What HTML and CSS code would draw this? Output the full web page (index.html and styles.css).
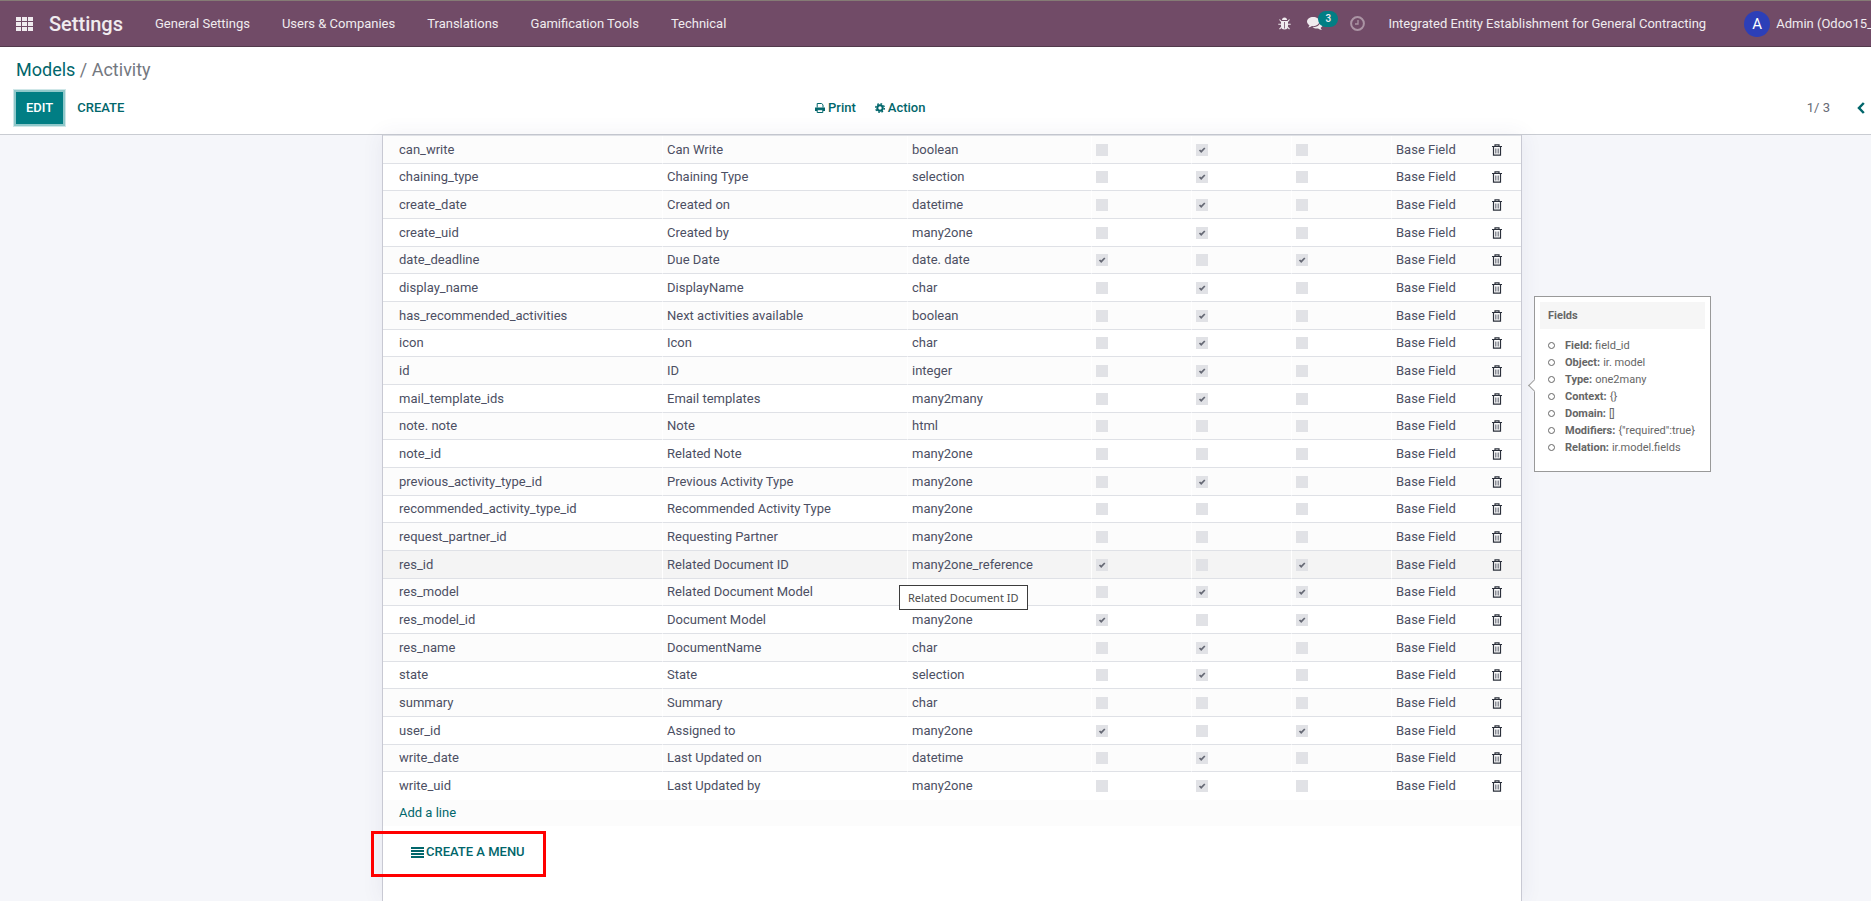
FILE: index.html
```html
<!doctype html>
<html lang="en">
<head>
<meta charset="utf-8">
<title>Activity - Settings</title>
<link rel="stylesheet" href="styles.css">
</head>

<body>
<svg class="sprite" aria-hidden="true">
	<symbol id="trash" viewBox="0 0 10 12">
		<path d="M0 2.5h10M3 2V.8h4V2M1.5 3v8.2h7V3" fill="none" stroke="#2b303b" stroke-width="1.2"/>
		<path d="M3.5 4.5v5M5 4.5v5M6.5 4.5v5" fill="none" stroke="#6b6f7a" stroke-width=".8"/>
	</symbol>
</svg>

<header class="navbar">
	<button class="apps" aria-label="Applications">
		<svg width="17" height="14" viewBox="0 0 17 14" fill="currentColor"><path d="M0 0h5v4H0zM6 0h5v4H6zM12 0h5v4h-5zM0 5h5v4H0zM6 5h5v4H6zM12 5h5v4h-5zM0 10h5v4H0zM6 10h5v4H6zM12 10h5v4h-5z"/></svg>
	</button>
	<a class="brand" href="#">Settings</a>
	<nav class="menu">
		<a href="#">General Settings</a>
		<a href="#">Users &amp; Companies</a>
		<a href="#">Translations</a>
		<a href="#">Gamification Tools</a>
		<a href="#">Technical</a>
	</nav>
	<div class="systray">
		<button class="tray" aria-label="Debug">
			<svg width="13" height="13" viewBox="0 0 13 13"><path d="M4 3a2.5 2.5 0 0 1 5 0z" fill="currentColor"/><path d="M3 4h7v5a3.5 3.5 0 0 1-7 0z" fill="currentColor"/><path d="M1.500 2.500 3.500 4.800M11.500 2.500 9.500 4.800M.3 7.300h12.400M1.500 12.200 3.600 9.800M11.500 12.200 9.400 9.800" stroke="currentColor" stroke-width="1.1"/><path d="M6.500 5v6.500" stroke="#714b67" stroke-width=".8"/></svg>
		</button>
		<button class="tray chat" aria-label="Messages">
			<svg width="16" height="14" viewBox="0 0 16 14" fill="currentColor"><path d="M6.200 0c3.400 0 6.200 2 6.200 4.600S9.600 9.200 6.200 9.200l-1.200-.1C3.900 9.900 2.500 10.500 1 10.600c.7-.6 1.300-1.300 1.400-2.300C.9 7.400 0 6.100 0 4.600 0 2 2.800 0 6.200 0z"/><path d="M13.500 3.800C15 4.600 16 5.900 16 7.300c0 1.400-.9 2.700-2.300 3.500.1 1 .7 1.600 1.300 2.200-1.500-.1-2.900-.6-3.900-1.500-2 .3-4.200-.1-5.700-1.300 4.400.2 8.300-2.300 8.100-6.400z"/></svg>
			<span class="badge">3</span>
		</button>
		<button class="tray clock" aria-label="Activities">
			<svg width="15" height="15" viewBox="0 0 15 15" fill="none" stroke="currentColor"><circle cx="7.500" cy="7.500" r="6.400" stroke-width="2"/><path d="M8 4v4H5" stroke-width="1.300"/></svg>
		</button>
		<a class="company" href="#">Integrated Entity Establishment for General Contracting</a>
		<a class="user" href="#"><span class="avatar">A</span>Admin (Odoo15_</a>
	</div>
</header>

<section class="control-panel">
	<div class="breadcrumb"><a href="#">Models</a> / Activity</div>
	<div class="toolbar">
		<div class="buttons">
			<button class="btn btn-primary">EDIT</button>
			<button class="btn btn-link">CREATE</button>
		</div>
		<div class="actions">
			<button class="btn-action">
				<svg width="10" height="10" viewBox="0 0 10 10" fill="none" stroke="currentColor"><path d="M2.200 4.500v-4h4.500l1.300 1.300v2.700"/><path d="M0 4.500h10v3.500H0z" fill="currentColor" stroke="none"/><path d="M2.200 6.700h5.600v2.800H2.200z" fill="#fff"/></svg>
				Print
			</button>
			<button class="btn-action">
				<svg width="10" height="10" viewBox="0 0 10 10" fill="none" stroke="currentColor"><circle cx="5" cy="5" r="2.700" stroke-width="2"/><circle cx="5" cy="5" r="4.300" stroke-width="1.400" stroke-dasharray="1.700 1.677"/></svg>
				Action
			</button>
		</div>
		<div class="pager">
			<span>1/ 3</span>
			<button class="prev" aria-label="Previous"><svg width="8" height="12" viewBox="0 0 8 12" fill="none" stroke="currentColor" stroke-width="2.500"><path d="M6.800 1 2 6l4.800 5"/></svg></button>
		</div>
	</div>
</section>

<main class="content">
	<div class="sheet">
		<table class="fields">
			<colgroup><col class="c-name"><col class="c-label"><col class="c-type"><col class="c-bool"><col class="c-bool"><col class="c-bool"><col><col class="c-trash"></colgroup>
			<tbody>
				<tr><td>can_write</td><td>Can Write</td><td>boolean</td><td><input type="checkbox" aria-label="Required" disabled></td><td><input type="checkbox" aria-label="Readonly" disabled checked></td><td><input type="checkbox" aria-label="Indexed" disabled></td><td>Base Field</td><td><button class="del" aria-label="Delete"><svg><use href="#trash"/></svg></button></td></tr>
				<tr><td>chaining_type</td><td>Chaining Type</td><td>selection</td><td><input type="checkbox" aria-label="Required" disabled></td><td><input type="checkbox" aria-label="Readonly" disabled checked></td><td><input type="checkbox" aria-label="Indexed" disabled></td><td>Base Field</td><td><button class="del" aria-label="Delete"><svg><use href="#trash"/></svg></button></td></tr>
				<tr><td>create_date</td><td>Created on</td><td>datetime</td><td><input type="checkbox" aria-label="Required" disabled></td><td><input type="checkbox" aria-label="Readonly" disabled checked></td><td><input type="checkbox" aria-label="Indexed" disabled></td><td>Base Field</td><td><button class="del" aria-label="Delete"><svg><use href="#trash"/></svg></button></td></tr>
				<tr><td>create_uid</td><td>Created by</td><td>many2one</td><td><input type="checkbox" aria-label="Required" disabled></td><td><input type="checkbox" aria-label="Readonly" disabled checked></td><td><input type="checkbox" aria-label="Indexed" disabled></td><td>Base Field</td><td><button class="del" aria-label="Delete"><svg><use href="#trash"/></svg></button></td></tr>
				<tr><td>date_deadline</td><td>Due Date</td><td>date. date</td><td><input type="checkbox" aria-label="Required" disabled checked></td><td><input type="checkbox" aria-label="Readonly" disabled></td><td><input type="checkbox" aria-label="Indexed" disabled checked></td><td>Base Field</td><td><button class="del" aria-label="Delete"><svg><use href="#trash"/></svg></button></td></tr>
				<tr><td>display_name</td><td>DisplayName</td><td>char</td><td><input type="checkbox" aria-label="Required" disabled></td><td><input type="checkbox" aria-label="Readonly" disabled checked></td><td><input type="checkbox" aria-label="Indexed" disabled></td><td>Base Field</td><td><button class="del" aria-label="Delete"><svg><use href="#trash"/></svg></button></td></tr>
				<tr><td>has_recommended_activities</td><td>Next activities available</td><td>boolean</td><td><input type="checkbox" aria-label="Required" disabled></td><td><input type="checkbox" aria-label="Readonly" disabled checked></td><td><input type="checkbox" aria-label="Indexed" disabled></td><td>Base Field</td><td><button class="del" aria-label="Delete"><svg><use href="#trash"/></svg></button></td></tr>
				<tr><td>icon</td><td>Icon</td><td>char</td><td><input type="checkbox" aria-label="Required" disabled></td><td><input type="checkbox" aria-label="Readonly" disabled checked></td><td><input type="checkbox" aria-label="Indexed" disabled></td><td>Base Field</td><td><button class="del" aria-label="Delete"><svg><use href="#trash"/></svg></button></td></tr>
				<tr><td>id</td><td>ID</td><td>integer</td><td><input type="checkbox" aria-label="Required" disabled></td><td><input type="checkbox" aria-label="Readonly" disabled checked></td><td><input type="checkbox" aria-label="Indexed" disabled></td><td>Base Field</td><td><button class="del" aria-label="Delete"><svg><use href="#trash"/></svg></button></td></tr>
				<tr><td>mail_template_ids</td><td>Email templates</td><td>many2many</td><td><input type="checkbox" aria-label="Required" disabled></td><td><input type="checkbox" aria-label="Readonly" disabled checked></td><td><input type="checkbox" aria-label="Indexed" disabled></td><td>Base Field</td><td><button class="del" aria-label="Delete"><svg><use href="#trash"/></svg></button></td></tr>
				<tr><td>note. note</td><td>Note</td><td>html</td><td><input type="checkbox" aria-label="Required" disabled></td><td><input type="checkbox" aria-label="Readonly" disabled></td><td><input type="checkbox" aria-label="Indexed" disabled></td><td>Base Field</td><td><button class="del" aria-label="Delete"><svg><use href="#trash"/></svg></button></td></tr>
				<tr><td>note_id</td><td>Related Note</td><td>many2one</td><td><input type="checkbox" aria-label="Required" disabled></td><td><input type="checkbox" aria-label="Readonly" disabled></td><td><input type="checkbox" aria-label="Indexed" disabled></td><td>Base Field</td><td><button class="del" aria-label="Delete"><svg><use href="#trash"/></svg></button></td></tr>
				<tr><td>previous_activity_type_id</td><td>Previous Activity Type</td><td>many2one</td><td><input type="checkbox" aria-label="Required" disabled></td><td><input type="checkbox" aria-label="Readonly" disabled checked></td><td><input type="checkbox" aria-label="Indexed" disabled></td><td>Base Field</td><td><button class="del" aria-label="Delete"><svg><use href="#trash"/></svg></button></td></tr>
				<tr><td>recommended_activity_type_id</td><td>Recommended Activity Type</td><td>many2one</td><td><input type="checkbox" aria-label="Required" disabled></td><td><input type="checkbox" aria-label="Readonly" disabled></td><td><input type="checkbox" aria-label="Indexed" disabled></td><td>Base Field</td><td><button class="del" aria-label="Delete"><svg><use href="#trash"/></svg></button></td></tr>
				<tr><td>request_partner_id</td><td>Requesting Partner</td><td>many2one</td><td><input type="checkbox" aria-label="Required" disabled></td><td><input type="checkbox" aria-label="Readonly" disabled></td><td><input type="checkbox" aria-label="Indexed" disabled></td><td>Base Field</td><td><button class="del" aria-label="Delete"><svg><use href="#trash"/></svg></button></td></tr>
				<tr class="hover"><td>res_id</td><td>Related Document ID</td><td class="tip-cell">many2one_reference<span class="tip" role="tooltip">Related Document ID</span></td><td><input type="checkbox" aria-label="Required" disabled checked></td><td><input type="checkbox" aria-label="Readonly" disabled></td><td><input type="checkbox" aria-label="Indexed" disabled checked></td><td>Base Field</td><td><button class="del" aria-label="Delete"><svg><use href="#trash"/></svg></button></td></tr>
				<tr><td>res_model</td><td>Related Document Model</td><td></td><td><input type="checkbox" aria-label="Required" disabled></td><td><input type="checkbox" aria-label="Readonly" disabled checked></td><td><input type="checkbox" aria-label="Indexed" disabled checked></td><td>Base Field</td><td><button class="del" aria-label="Delete"><svg><use href="#trash"/></svg></button></td></tr>
				<tr><td>res_model_id</td><td>Document Model</td><td>many2one</td><td><input type="checkbox" aria-label="Required" disabled checked></td><td><input type="checkbox" aria-label="Readonly" disabled></td><td><input type="checkbox" aria-label="Indexed" disabled checked></td><td>Base Field</td><td><button class="del" aria-label="Delete"><svg><use href="#trash"/></svg></button></td></tr>
				<tr><td>res_name</td><td>DocumentName</td><td>char</td><td><input type="checkbox" aria-label="Required" disabled></td><td><input type="checkbox" aria-label="Readonly" disabled checked></td><td><input type="checkbox" aria-label="Indexed" disabled></td><td>Base Field</td><td><button class="del" aria-label="Delete"><svg><use href="#trash"/></svg></button></td></tr>
				<tr><td>state</td><td>State</td><td>selection</td><td><input type="checkbox" aria-label="Required" disabled></td><td><input type="checkbox" aria-label="Readonly" disabled checked></td><td><input type="checkbox" aria-label="Indexed" disabled></td><td>Base Field</td><td><button class="del" aria-label="Delete"><svg><use href="#trash"/></svg></button></td></tr>
				<tr><td>summary</td><td>Summary</td><td>char</td><td><input type="checkbox" aria-label="Required" disabled></td><td><input type="checkbox" aria-label="Readonly" disabled></td><td><input type="checkbox" aria-label="Indexed" disabled></td><td>Base Field</td><td><button class="del" aria-label="Delete"><svg><use href="#trash"/></svg></button></td></tr>
				<tr><td>user_id</td><td>Assigned to</td><td>many2one</td><td><input type="checkbox" aria-label="Required" disabled checked></td><td><input type="checkbox" aria-label="Readonly" disabled></td><td><input type="checkbox" aria-label="Indexed" disabled checked></td><td>Base Field</td><td><button class="del" aria-label="Delete"><svg><use href="#trash"/></svg></button></td></tr>
				<tr><td>write_date</td><td>Last Updated on</td><td>datetime</td><td><input type="checkbox" aria-label="Required" disabled></td><td><input type="checkbox" aria-label="Readonly" disabled checked></td><td><input type="checkbox" aria-label="Indexed" disabled></td><td>Base Field</td><td><button class="del" aria-label="Delete"><svg><use href="#trash"/></svg></button></td></tr>
				<tr><td>write_uid</td><td>Last Updated by</td><td>many2one</td><td><input type="checkbox" aria-label="Required" disabled></td><td><input type="checkbox" aria-label="Readonly" disabled checked></td><td><input type="checkbox" aria-label="Indexed" disabled></td><td>Base Field</td><td><button class="del" aria-label="Delete"><svg><use href="#trash"/></svg></button></td></tr>
				<tr class="add"><td colspan="8"><a href="#">Add a line</a></td></tr>
			</tbody>
		</table>
		<button class="create-menu">
			<svg width="13" height="11" viewBox="0 0 13 11" stroke="currentColor" stroke-width="1.800"><path d="M0 1h13M0 4h13M0 7h13M0 10h13"/></svg>
			CREATE A MENU
		</button>

		<aside class="popover">
			<h3>Fields</h3>
			<ul>
				<li><b>Field:</b> field_id</li>
				<li><b>Object:</b> ir. model</li>
				<li><b>Type:</b> one2many</li>
				<li><b>Context:</b> {}</li>
				<li><b>Domain:</b> []</li>
				<li><b>Modifiers:</b> {"required":true}</li>
				<li><b>Relation:</b> ir.model.fields</li>
			</ul>
		</aside>
	</div>
</main>
</body>
</html>
```
FILE: styles.css
```css
* {margin:0; padding:0; box-sizing:border-box;}
html, body {height:100%; overflow:hidden;}
body {display:flex; flex-direction:column; background:#f5f6fa; color:#4c4f63; font:13px/18px Roboto, sans-serif;}
a {color:inherit; text-decoration:none;}
button {border:0; background:none; color:inherit; font:inherit; cursor:pointer;}
svg {display:block; flex:none;}
.sprite {position:absolute; width:0; height:0;}

/* top bar */
.navbar {display:flex; flex:none; align-items:center; height:47px; padding-left:16px; background:#714b67; border-top:1px solid #857b75; border-bottom:1px solid #523a4c; color:#f0ebef; white-space:nowrap;}
.brand {margin:0 16px; font-size:20px; font-weight:500; line-height:24px;}
.menu {display:flex;}
.menu a {padding:0 16px;}
.systray {display:flex; align-items:center; margin:0 -2px 0 auto;}
.tray {margin-right:16px;}
.chat {position:relative; margin-right:27px;}
.badge {position:absolute; left:11px; top:-6px; width:20px; height:16px; border-radius:8px; background:#017e84; font-size:10px; font-weight:500; line-height:16px; text-align:center;}
.clock {margin-right:23px; color:#ab94a4;}
.company {margin-right:38px;}
.user {display:flex; align-items:center; gap:6px;}
.avatar {width:26px; height:26px; border-radius:50%; background:#2c3fb8; color:#fff; font-size:15px; line-height:26px; text-align:center;}

/* control panel */
.control-panel {flex:none; padding:13px 6px 10px 16px; background:#fff; border-bottom:1px solid #c9ccd2;}
.breadcrumb {font-size:18px; line-height:20px; color:#74787f;}
.breadcrumb a {color:#01666b;}
.toolbar {display:grid; grid-template-columns:799px auto 1fr; align-items:center; margin-top:12px; color:#01666b; font-weight:500;}
.buttons {display:flex;}
.btn {height:32px; padding:0 10px;}
.btn-primary {margin-right:4px; background:#017e84; color:#fff; box-shadow:0 0 0 2px #8fc8ca, 0 0 0 3px #cfe7e8;}
.actions {display:flex; gap:19px;}
.btn-action {display:flex; align-items:center; gap:3px;}
.pager {display:flex; justify-content:flex-end; align-items:center; gap:27px; color:#666a75; font-weight:400;}
.prev {color:#01666b;}

/* form sheet */
.content {display:flex; flex:1; justify-content:center; padding-left:33px;}
.sheet {position:relative; width:1140px; background:#fff; border:solid #c8c9d3; border-width:0 1px; box-shadow:0 0 20px rgba(60,70,110,.08);}
.fields {width:100%; table-layout:fixed; border-spacing:0; border-top:1px solid #dfe1e6;}
.c-name {width:279px;}
.c-label {width:245px;}
.c-type {width:184px;}
.c-bool {width:100px;}
.c-trash {width:33px;}
.fields td {height:28px; padding:0 4px; border-left:1px solid #fff; border-bottom:1px solid #dfe1e6; white-space:nowrap;}
.fields tr:nth-child(3n+2) td {height:27px;}
.fields td:first-child {padding-left:16px; border-left:0;}
.fields td:last-child {border-left:0;}
.fields tr:nth-child(odd) {background:#fcfcfc;}
.fields tr.hover {background:#f4f4f4;}
.fields tr:nth-child(24) td, .fields .add td {border-bottom:0;}
.fields .add td {height:26px; color:#01666b;}
.fields input {display:block; width:12px; height:12px; appearance:none; background:#e1e2e6;}
.fields input:checked {background:#e1e2e6 url("data:image/svg+xml,%3Csvg xmlns='http://www.w3.org/2000/svg' viewBox='0 0 12 12'%3E%3Cpath d='M3.500 6l1.700 1.700L8.800 4' fill='none' stroke='%23666975' stroke-width='1.700'/%3E%3C/svg%3E");}
.del {display:block;}
.del svg {width:10px; height:12px;}

.create-menu {display:flex; align-items:center; gap:2px; height:46px; margin:5px 0 0 -12px; padding:0 18px 4px 37px; border:3px solid #f00; color:#01666b; font-weight:500;}

/* hover tooltips */
.tip-cell {position:relative;}
.tip {position:absolute; left:-9px; top:34px; z-index:1; padding:0 8px; border:1px solid #3c3c3c; background:#fff; color:#4b4b4b; font:11px/23px "Noto Sans", sans-serif;}
.popover {position:absolute; left:100%; top:161px; width:177px; margin-left:13px; padding:5px; border:1px solid #999; background:#fff; color:#666; font-size:11px; line-height:17px;}
.popover:before {content:""; position:absolute; left:-5px; top:84px; width:8px; height:8px; border-left:1px solid #999; border-bottom:1px solid #999; background:#fff; transform:rotate(45deg);}
.popover h3 {padding:5px 8px; background:#f6f6f6; font-size:11px; font-weight:700;}
.popover ul {padding:8px 0 10px 8px; list-style:none;}
.popover li {display:flex; align-items:center; gap:3px;}
.popover li:before {content:""; width:5px; height:5px; margin-right:7px; border:1px solid #666; border-radius:50%;}
.popover b {font-weight:700;}
```
